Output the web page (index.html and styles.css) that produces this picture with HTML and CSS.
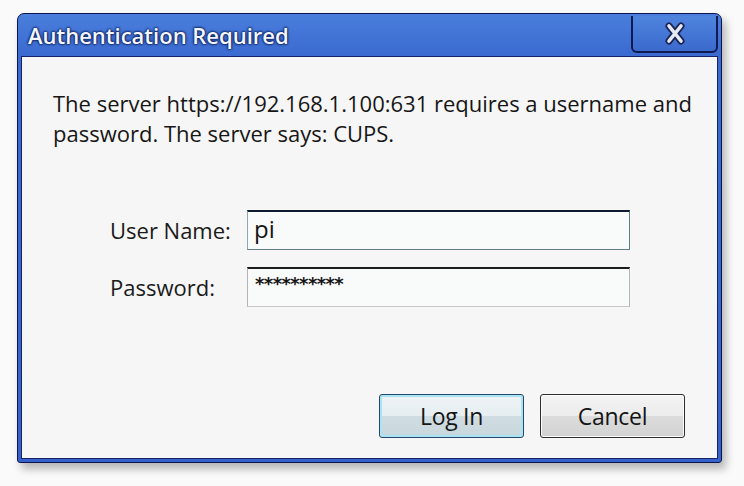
FILE: index.html
```html
<!DOCTYPE html>
<html>
<head>
<meta charset="utf-8">
<link rel="stylesheet" href="styles.css">
</head>
<body>
<div class="window">
  <div class="titlebar">
    <span class="title">Authentication Required</span>
    <div class="close">
      <svg width="30" height="24" viewBox="0 0 30 24">
        <path d="M9 4 L21 19 M21 4 L9 19" stroke="#1b2555" stroke-width="7" stroke-linecap="round"/>
        <path d="M9 4 L21 19 M21 4 L9 19" stroke="#e6eaf2" stroke-width="3.6" stroke-linecap="round"/>
      </svg>
    </div>
  </div>
  <div class="frame">
    <div class="content">
      <p class="msg">The server https://192.168.1.100:631 requires a username and<br>password. The server says: CUPS.</p>
      <div class="form">
        <label class="lbl">User Name:</label>
        <div class="field focus">pi</div>
        <label class="lbl">Password:</label>
        <div class="field pw">**********</div>
      </div>
      <div class="buttons">
        <div class="btn default">Log In</div>
        <div class="btn">Cancel</div>
      </div>
    </div>
  </div>
</div>
</body>
</html>
```

FILE: styles.css
```css
html, body {
  margin: 0;
  padding: 0;
  background: #fafafa;
  font-family: "Open Sans", "Noto Sans", sans-serif;
}
body {
  width: 744px;
  height: 486px;
  overflow: hidden;
}
.window {
  margin: 13px 0 0 17px;
  width: 703px;
  height: 448px;
  border: 1px solid #0d1550;
  border-radius: 7px 7px 3px 3px;
  background: linear-gradient(#4a7fdc, #3b6bd0 40px, #3462c8);
  box-shadow: 4px 6px 9px rgba(0,0,0,0.28);
  display: flex;
  flex-direction: column;
}
.titlebar {
  height: 42px;
  display: flex;
  align-items: stretch;
  justify-content: space-between;
  flex: none;
}
.title {
  padding: 6px 0 0 10px;
  font-size: 22px;
  font-weight: 600;
  color: #f4f7ff;
  text-shadow: 0 0 2px #0b1d5a, 0 0 2px #0b1d5a, 0 0 3px #0b1d5a;
}
.close {
  margin: 2px 3px 3px 0;
  width: 83px;
  border: 2px solid #101a52;
  border-top: none;
  border-radius: 0 0 6px 6px;
  background: linear-gradient(#4f84de, #3a6acd);
  display: flex;
  align-items: center;
  justify-content: center;
}
.frame {
  flex: 1;
  padding: 0 3px 3px 3px;
  display: flex;
}
.content {
  flex: 1;
  border: 1px solid #17216a;
  background: #f6f6f6;
  display: flex;
  flex-direction: column;
}
.msg {
  margin: 31px 0 0 31px;
  font-size: 22px;
  line-height: 30px;
  color: #161616;
}
.form {
  margin: 62px 0 0 88px;
  display: grid;
  grid-template-columns: 137px 383px;
  grid-auto-rows: 40px;
  row-gap: 17px;
  align-items: center;
}
.lbl {
  font-size: 22px;
  color: #1a1a1a;
}
.field {
  height: 100%;
  box-sizing: border-box;
  border: 1px solid #b4b4b4;
  border-top: 2px solid #1c1c1c;
  border-bottom-color: #c8c8c8;
  background: #f9fafa;
  padding-left: 6px;
  font-size: 24px;
  line-height: 34px;
  color: #151515;
}
.field.focus {
  border-top-color: #0e1a30;
  border-bottom-color: #5e7d88;
  border-right-color: #5e7d88;
  border-left-color: #8aa;
}
.field.pw {
  font-size: 18px;
  font-weight: bold;
  line-height: 30px;
  letter-spacing: -0.6px;
  padding-left: 7px;
  font-family: "DejaVu Sans", sans-serif;
}
.buttons {
  margin-top: auto;
  margin-bottom: 20px;
  padding-right: 32px;
  display: flex;
  justify-content: flex-end;
  gap: 16px;
}
.btn {
  width: 143px;
  height: 42px;
  border: 1px solid #2e2e2e;
  border-radius: 3px;
  box-shadow: inset 0 0 0 1px #fbfbfb;
  background: linear-gradient(#f3f3f3, #ececec 50%, #dcdcdc 51%, #d2d2d2);
  display: flex;
  align-items: center;
  justify-content: center;
  font-size: 23px;
  color: #151515;
  letter-spacing: -0.3px;
}
.btn.default {
  border-color: #27466a;
  box-shadow: inset 0 0 0 2px #a8e4f4;
  background: linear-gradient(#eef3f5, #e6eef1 50%, #cfdde2 51%, #c8d7dc);
}
```
